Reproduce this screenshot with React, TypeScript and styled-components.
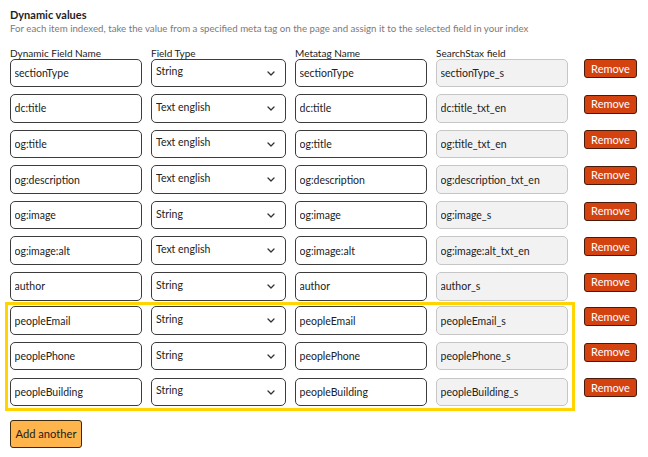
import React from "react";
import styled, { createGlobalStyle } from "styled-components";

const Global = createGlobalStyle`
  html, body { margin: 0; padding: 0; background: #ffffff; }
  body { font-family: Lato, "Open Sans", Arial, sans-serif; color: #222; }
`;

const Page = styled.div`
  padding: 7.5px 10px 10px 10px;
`;

const Title = styled.h2`
  margin: 0;
  font-size: 11px;
  line-height: 13px;
  font-weight: 700;
  color: #1e1e1e;
`;

const Subtitle = styled.p`
  margin: 1px 0 0 0;
  font-size: 9.7px;
  line-height: 12px;
  color: #7a7a7a;
  white-space: nowrap;
`;

const Table = styled.div`
  margin-top: 13px;
  display: flex;
  flex-direction: column;
  gap: 7.1px;
`;

const Row = styled.div`
  display: grid;
  grid-template-columns: 132px 135px 132px 132px 53px;
  column-gap: 9px;
  align-items: start;
`;

const HeaderRow = styled(Row)`
  margin-bottom: -7.1px;
`;

const Label = styled.div`
  font-size: 10px;
  line-height: 12px;
  color: #222;
  white-space: nowrap;
`;

const Field = styled.input<{ $locked?: boolean }>`
  box-sizing: border-box;
  width: 100%;
  height: 28.5px;
  margin: 0;
  padding: 0 3.5px;
  font-family: Lato, "Open Sans", Arial, sans-serif;
  font-size: 10.5px;
  color: #222;
  border-radius: 5px;
  border: 1px solid ${(p) => (p.$locked ? "#c6c6c6" : "#3c3c3c")};
  background: ${(p) => (p.$locked ? "#f2f2f2" : "#ffffff")};
  outline: none;
`;

const SelectWrap = styled.div`
  position: relative;
  height: 28.5px;
`;

const Select = styled.select`
  box-sizing: border-box;
  appearance: none;
  -webkit-appearance: none;
  width: 100%;
  height: 28.5px;
  margin: 0;
  padding: 0 4px 3px 4px;
  font-family: Lato, "Open Sans", Arial, sans-serif;
  font-size: 10.5px;
  color: #222;
  border-radius: 5px;
  border: 1px solid #3c3c3c;
  background: #ffffff;
  outline: none;
`;

const Chevron = styled.svg`
  position: absolute;
  right: 11px;
  top: 12px;
  width: 8px;
  height: 5px;
  pointer-events: none;
`;

const RemoveButton = styled.button`
  box-sizing: border-box;
  margin: 0.7px 0 0 7px;
  width: 53px;
  height: 19px;
  padding: 0 0 1px 0;
  font-family: Lato, "Open Sans", Arial, sans-serif;
  font-size: 11px;
  color: #ffffff;
  background: #d4420f;
  border: 1px solid #4a1a08;
  border-radius: 3px;
  cursor: pointer;
`;

const Highlight = styled.div`
  position: relative;
  margin-top: -1.3px;
  display: flex;
  flex-direction: column;
  gap: 7.1px;
  &::before {
    content: "";
    position: absolute;
    left: -5px;
    top: -4.3px;
    bottom: -5px;
    width: 570px;
    border: 3px solid #ffd400;
    box-sizing: border-box;
    pointer-events: none;
  }
`;

const AddButton = styled.button`
  box-sizing: border-box;
  margin-top: 14px;
  width: 72px;
  height: 28px;
  padding: 0 0 1px 0;
  font-family: Lato, "Open Sans", Arial, sans-serif;
  font-size: 11.2px;
  color: #1c1c1c;
  background: #ffb44c;
  border: 1px solid #3a2a10;
  border-radius: 3px;
  cursor: pointer;
`;

type Item = { name: string; type: string; meta: string; stax: string };

const items: Item[] = [
  { name: "sectionType", type: "String", meta: "sectionType", stax: "sectionType_s" },
  { name: "dc:title", type: "Text english", meta: "dc:title", stax: "dc:title_txt_en" },
  { name: "og:title", type: "Text english", meta: "og:title", stax: "og:title_txt_en" },
  { name: "og:description", type: "Text english", meta: "og:description", stax: "og:description_txt_en" },
  { name: "og:image", type: "String", meta: "og:image", stax: "og:image_s" },
  { name: "og:image:alt", type: "Text english", meta: "og:image:alt", stax: "og:image:alt_txt_en" },
  { name: "author", type: "String", meta: "author", stax: "author_s" },
];

const highlighted: Item[] = [
  { name: "peopleEmail", type: "String", meta: "peopleEmail", stax: "peopleEmail_s" },
  { name: "peoplePhone", type: "String", meta: "peoplePhone", stax: "peoplePhone_s" },
  { name: "peopleBuilding", type: "String", meta: "peopleBuilding", stax: "peopleBuilding_s" },
];

function ItemRow({ item }: { item: Item }) {
  return (
    <Row>
      <Field readOnly value={item.name} />
      <SelectWrap>
        <Select value={item.type} onChange={() => {}}>
          <option>String</option>
          <option>Text english</option>
        </Select>
        <Chevron viewBox="0 0 8 5">
          <path d="M1 1 L4 4 L7 1" fill="none" stroke="#333" strokeWidth="1.3" strokeLinecap="round" strokeLinejoin="round" />
        </Chevron>
      </SelectWrap>
      <Field readOnly value={item.meta} />
      <Field readOnly $locked value={item.stax} />
      <RemoveButton>Remove</RemoveButton>
    </Row>
  );
}

export default function App() {
  return (
    <Page>
      <Global />
      <Title>Dynamic values</Title>
      <Subtitle>
        For each item indexed, take the value from a specified meta tag on the page and assign it to the selected field in your index
      </Subtitle>
      <Table>
        <HeaderRow>
          <Label>Dynamic Field Name</Label>
          <Label>Field Type</Label>
          <Label>Metatag Name</Label>
          <Label>SearchStax field</Label>
          <span />
        </HeaderRow>
        {items.map((it) => (
          <ItemRow key={it.name} item={it} />
        ))}
        <Highlight>
          {highlighted.map((it) => (
            <ItemRow key={it.name} item={it} />
          ))}
        </Highlight>
      </Table>
      <AddButton>Add another</AddButton>
    </Page>
  );
}
